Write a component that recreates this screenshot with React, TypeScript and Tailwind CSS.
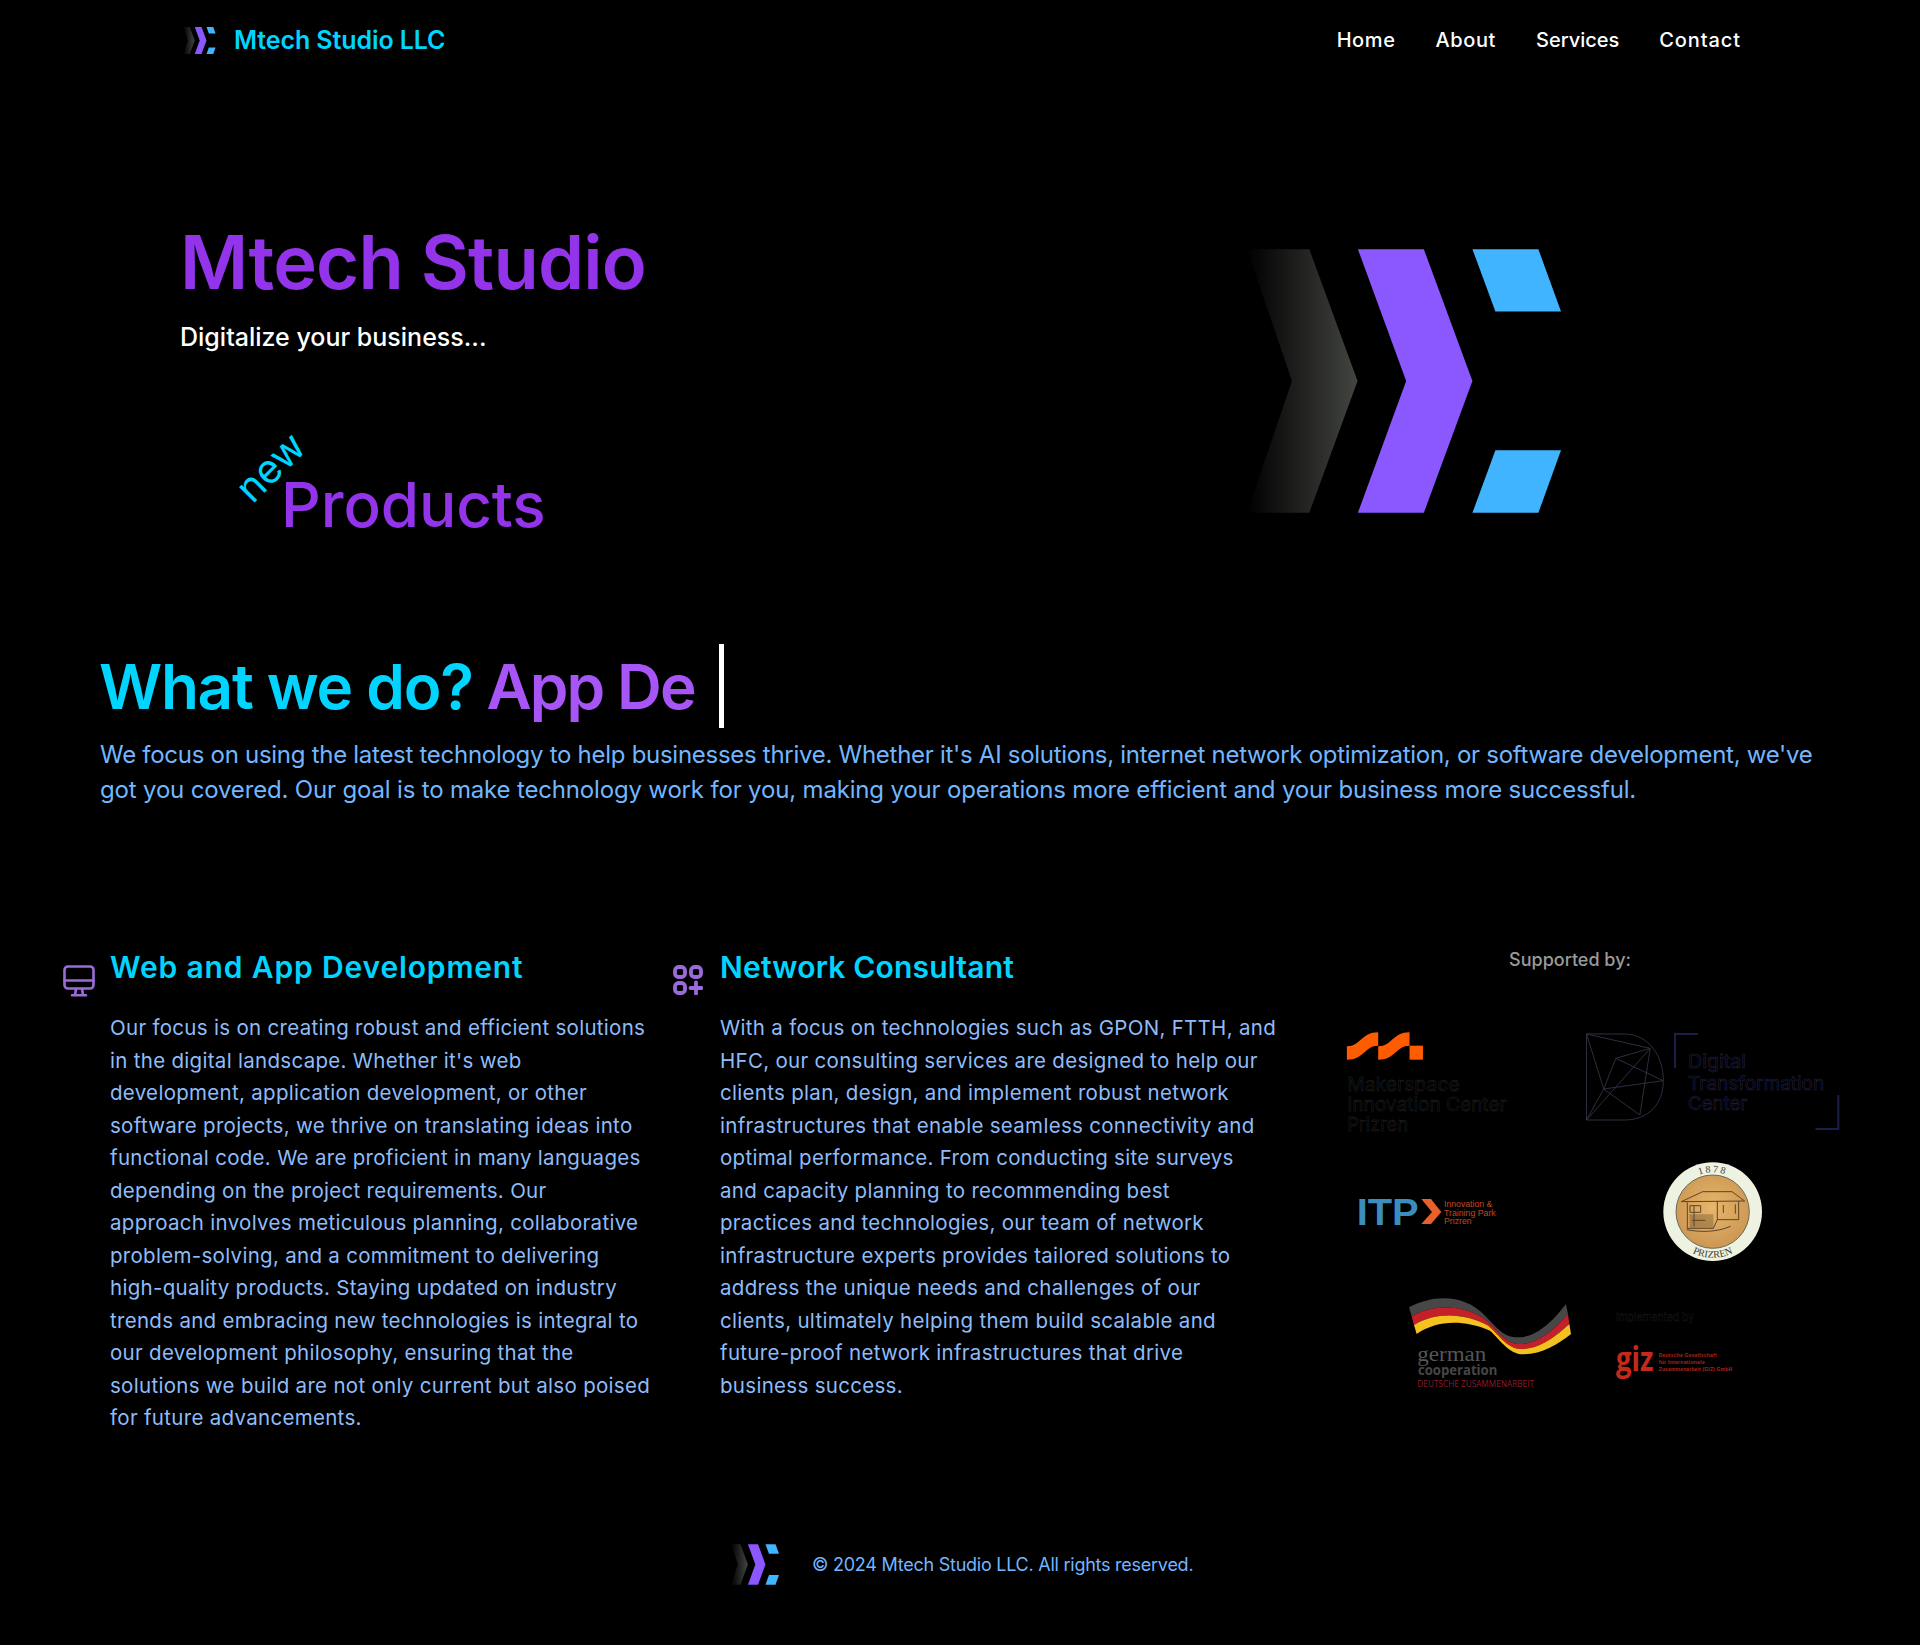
const col1 = [
  'Our focus is on creating robust and efficient solutions',
  "in the digital landscape. Whether it's web",
  'development, application development, or other',
  'software projects, we thrive on translating ideas into',
  'functional code. We are proficient in many languages',
  'depending on the project requirements. Our',
  'approach involves meticulous planning, collaborative',
  'problem-solving, and a commitment to delivering',
  'high-quality products. Staying updated on industry',
  'trends and embracing new technologies is integral to',
  'our development philosophy, ensuring that the',
  'solutions we build are not only current but also poised',
  'for future advancements.',
];

const col2 = [
  'With a focus on technologies such as GPON, FTTH, and',
  'HFC, our consulting services are designed to help our',
  'clients plan, design, and implement robust network',
  'infrastructures that enable seamless connectivity and',
  'optimal performance. From conducting site surveys',
  'and capacity planning to recommending best',
  'practices and technologies, our team of network',
  'infrastructure experts provides tailored solutions to',
  'address the unique needs and challenges of our',
  'clients, ultimately helping them build scalable and',
  'future-proof network infrastructures that drive',
  'business success.',
];

// edges of the ribbon in the german cooperation logo, top to bottom
const ribbonEdges = [
  [57, 85, 130, 45, 225, 45, 285, 110, 325, 150, 340, 175, 385, 175, 440, 175, 490, 125, 528, 75],
  [65, 112, 130, 75, 225, 75, 290, 125, 325, 155, 345, 195, 390, 195, 445, 195, 495, 150, 534, 106],
  [72, 138, 135, 100, 220, 100, 295, 140, 325, 165, 350, 210, 395, 210, 450, 210, 500, 170, 538, 135],
  [80, 165, 140, 125, 215, 120, 300, 155, 325, 175, 355, 226, 400, 226, 455, 226, 505, 195, 543, 165],
];

function ribbonBand(a: number[], b: number[]) {
  const pt = (e: number[], i: number) => `${e[i * 2]} ${e[i * 2 + 1]}`;
  return (
    `M${pt(a, 0)} C${pt(a, 1)} ${pt(a, 2)} ${pt(a, 3)} C${pt(a, 4)} ${pt(a, 5)} ${pt(a, 6)} C${pt(a, 7)} ${pt(a, 8)} ${pt(a, 9)} ` +
    `L${pt(b, 9)} C${pt(b, 8)} ${pt(b, 7)} ${pt(b, 6)} C${pt(b, 5)} ${pt(b, 4)} ${pt(b, 3)} C${pt(b, 2)} ${pt(b, 1)} ${pt(b, 0)} Z`
  );
}

function Logo({ className, id }: { className: string; id: string }) {
  return (
    <svg viewBox="80 88 943 792" className={className}>
      <defs>
        <linearGradient id={id} x1="80" x2="412" y1="0" y2="0" gradientUnits="userSpaceOnUse">
          <stop offset="0" stopColor="#000" />
          <stop offset="1" stopColor="#434541" />
        </linearGradient>
      </defs>
      <polygon points="80,88 267,88 412,484 267,880 80,880 215,484" fill={`url(#${id})`} />
      <polygon points="413,88 611,88 757,484 611,880 413,880 558,484" fill="#8b57ff" />
      <polygon points="757,88 955,88 1023,275 826,275" fill="#40b4ff" />
      <polygon points="826,692 1023,692 955,880 757,880" fill="#40b4ff" />
    </svg>
  );
}

function MakerspaceLogo() {
  const wave = 'M49 112 C90 112 90 70 140 70 V110 C100 110 100 152 49 152 Z';
  return (
    <svg viewBox="0 0 700 420" preserveAspectRatio="none" className="h-[140px] w-[241px]">
      <path d={wave} fill="#ff5c00" />
      <path d={wave} fill="#ff5c00" transform="translate(91 0)" />
      <rect x="231" y="110" width="39" height="42" fill="#ff5c00" />
      <g fill="#000" stroke="#2a2a2a" strokeWidth="1.2" fontSize="56" fontFamily="Inter, sans-serif">
        <text x="50" y="245" textLength="326" lengthAdjust="spacingAndGlyphs">Makerspace</text>
        <text x="50" y="307" textLength="463" lengthAdjust="spacingAndGlyphs">Innovation Center</text>
        <text x="50" y="367" textLength="176" lengthAdjust="spacingAndGlyphs">Prizren</text>
      </g>
    </svg>
  );
}

function DigitalLogo() {
  return (
    <svg viewBox="700 0 868 420" preserveAspectRatio="none" className="h-[140px] w-[299px]">
      <g fill="none" stroke="#34364a" strokeWidth="2.5">
        <path d="M745 75 H855 C925 75 968 140 968 215 C968 285 925 333 855 333 H745 Z" />
        <path d="M745 75 L930 118 L900 318 M745 75 L795 240 L745 333 M795 240 L968 215 M795 240 L830 148 L930 118 M830 148 L968 215 M930 118 L745 333 M795 240 L900 318" />
      </g>
      <path d="M1068 75 H1002 V178 M1410 360 H1476 V258" fill="none" stroke="#1c1e4a" strokeWidth="6" />
      <g fill="#000" stroke="#20224e" strokeWidth="1.6" fontSize="56" fontFamily="Inter, sans-serif">
        <text x="1040" y="178" textLength="168" lengthAdjust="spacingAndGlyphs">Digital</text>
        <text x="1040" y="243" textLength="395" lengthAdjust="spacingAndGlyphs">Transformation</text>
        <text x="1040" y="303" textLength="172" lengthAdjust="spacingAndGlyphs">Center</text>
      </g>
    </svg>
  );
}

function ItpLogo() {
  return (
    <svg viewBox="0 0 690 390" className="h-[130px] w-[230px]">
      <text x="80" y="227" textLength="186" lengthAdjust="spacingAndGlyphs" fontSize="108" fontWeight="700" fill="#3a8dbd" fontFamily="Liberation Sans, sans-serif">ITP</text>
      <polygon points="274,150 303,150 334,189 303,225 274,225 306,189" fill="#e8602a" />
      <g fontSize="25" fill="#c2491f" fontFamily="Liberation Sans, sans-serif">
        <text x="342" y="174" textLength="145" lengthAdjust="spacingAndGlyphs">Innovation &amp;</text>
        <text x="342" y="200" textLength="155" lengthAdjust="spacingAndGlyphs">Training Park</text>
        <text x="342" y="226" textLength="83" lengthAdjust="spacingAndGlyphs">Prizren</text>
      </g>
    </svg>
  );
}

function MedalLogo() {
  return (
    <svg viewBox="690 0 690 390" className="h-[130px] w-[230px]">
      <defs>
        <radialGradient id="medalGold" cx="0.5" cy="0.45" r="0.6">
          <stop offset="0" stopColor="#e8b66d" />
          <stop offset="1" stopColor="#c99450" />
        </radialGradient>
        <path id="medalTop" d="M1030 188 A118 118 0 0 1 1266 188" />
        <path id="medalBottom" d="M1010 188 A138 138 0 0 0 1286 188" />
      </defs>
      <circle cx="1148" cy="188" r="148" fill="#eef2e0" />
      <circle cx="1148" cy="188" r="110" fill="url(#medalGold)" stroke="#6a6a58" strokeWidth="3" />
      <text fontSize="30" fill="#3c3c34" letterSpacing="6" fontFamily="Liberation Serif, serif">
        <textPath href="#medalTop" startOffset="50%" textAnchor="middle">1878</textPath>
      </text>
      <text fontSize="30" fill="#3c3c34" fontFamily="Liberation Serif, serif">
        <textPath href="#medalBottom" startOffset="50%" textAnchor="middle">PRIZREN</textPath>
      </text>
      <g fill="none" stroke="#5c4526" strokeWidth="3">
        <path d="M1054 158 L1118 128 H1206 L1244 156 L1054 158 Z" />
        <path d="M1072 160 V238 M1162 156 V212 H1226 V156 M1072 238 H1150 L1162 212" />
        <path d="M1080 170 H1112 V190 H1080 Z M1092 170 V232 M1180 168 V192 M1216 166 V194 M1086 214 H1126 M1070 242 C1110 250 1160 250 1202 232" />
      </g>
      <path d="M1078 196 H1150 V236 H1080 Z" fill="#5c4526" opacity="0.35" />
    </svg>
  );
}

function GermanLogo() {
  const colours = ['#474747', '#c4202a', '#f4c21f'];
  return (
    <svg viewBox="0 0 600 390" className="h-[130px] w-[200px]">
      {colours.map((c, i) => (
        <path key={c} d={ribbonBand(ribbonEdges[i], ribbonEdges[i + 1])} fill={c} />
      ))}
      <text x="82" y="245" fontSize="64" fill="#565656" fontFamily="Liberation Serif, serif" textLength="207" lengthAdjust="spacingAndGlyphs">german</text>
      <text x="84" y="288" fontSize="42" fontWeight="700" fill="#474747" fontFamily="Open Sans, sans-serif" textLength="238" lengthAdjust="spacingAndGlyphs">cooperation</text>
      <text x="82" y="325" fontSize="25" fill="#8c1c2c" fontFamily="Open Sans, sans-serif" textLength="350" lengthAdjust="spacingAndGlyphs">DEUTSCHE ZUSAMMENARBEIT</text>
    </svg>
  );
}

function GizLogo() {
  return (
    <svg viewBox="600 0 480 390" className="h-[130px] w-[160px]">
      <text x="678" y="126" fontSize="34" fill="#000" stroke="#1e1e1e" strokeWidth="1" fontFamily="Inter, sans-serif" textLength="234" lengthAdjust="spacingAndGlyphs">Implemented by</text>
      <text x="678" y="276" fontSize="104" fontWeight="700" fill="#c8281c" fontFamily="Open Sans, sans-serif" textLength="112" lengthAdjust="spacingAndGlyphs">giz</text>
      <g fontSize="15" fontWeight="700" fill="#b0261c" fontFamily="Liberation Sans, sans-serif">
        <text x="806" y="235" textLength="174">Deutsche Gesellschaft</text>
        <text x="806" y="254" textLength="138">für Internationale</text>
        <text x="806" y="275" textLength="220">Zusammenarbeit (GIZ) GmbH</text>
      </g>
    </svg>
  );
}

function MonitorIcon() {
  return (
    <svg viewBox="0 0 32 32" className="h-8 w-8 shrink-0" fill="none" stroke="#9b6bdc" strokeWidth="2.6" strokeLinejoin="round" strokeLinecap="round">
      <rect x="1.5" y="1.5" width="29" height="22" rx="3.5" />
      <path d="M1.5 15.5 H30.5 M13 24 L12 30 M19 24 L20 30 M9 30.3 H23" />
    </svg>
  );
}

function AppsIcon() {
  return (
    <svg viewBox="0 0 30 30" className="h-[30px] w-[30px] shrink-0" fill="none" stroke="#9b6bdc" strokeWidth="3.8" strokeLinecap="round">
      <rect x="2" y="2" width="10" height="10" rx="3.6" />
      <rect x="18" y="2" width="10" height="10" rx="3.6" />
      <rect x="2" y="18" width="10" height="10" rx="3.6" />
      <path d="M23 17.5 V28.5 M17.5 23 H28.5" />
    </svg>
  );
}

function Service({ icon, title, titleClass, lines, className }: { icon: React.ReactNode; title: string; titleClass: string; lines: string[]; className: string }) {
  return (
    <div className={`flex shrink-0 ${className}`}>
      <div className="pt-[16px]">{icon}</div>
      <div>
        <h3 className={`text-[30px] leading-[36px] font-semibold text-[#00d4ff] ${titleClass}`}>{title}</h3>
        <p className="mt-[27px] text-[20.5px] leading-[32.5px] tracking-[0.3px] text-[#8fbcf8]">
          {lines.map((l) => (
            <span key={l} className="block whitespace-nowrap">{l}</span>
          ))}
        </p>
      </div>
    </div>
  );
}

export default function App() {
  return (
    <div className="h-[1645px] overflow-hidden bg-black font-['Inter',sans-serif]">
      {/* Header */}
      <header className="flex h-20 items-center justify-between pr-[179px] pl-[183px]">
        <div className="flex items-center gap-[18px]">
          <Logo id="logoHead" className="h-[27px] w-[33px]" />
          <span className="mt-px text-[25px] font-semibold tracking-[-0.1px] text-[#00d4ff]">Mtech Studio LLC</span>
        </div>
        <nav className="flex gap-10 text-[20px] font-medium tracking-[0.6px] text-white">
          <a>Home</a>
          <a>About</a>
          <a className="tracking-normal">Services</a>
          <a className="tracking-[0.9px]">Contact</a>
        </nav>
      </header>

      {/* Hero */}
      <section className="flex justify-between pr-[359px] pl-[180px]">
        <div className="pt-[146px]">
          <h1 className="text-[74px] leading-[72px] font-semibold tracking-[-0.8px] text-[#9333ea]">Mtech Studio</h1>
          <p className="mt-[23px] text-[25px] leading-8 font-medium text-white">Digitalize your business...</p>
          <div className="relative mt-[122px] ml-[101px] text-[62px] leading-[60px] font-medium tracking-[-0.1px] text-[#9333ea]">
            Products
            <span className="absolute top-[-38px] left-[-50px] -rotate-45 text-[40px] leading-[60px] font-normal text-[#00d4ff]">new</span>
          </div>
        </div>
        <div className="pt-[169px]">
          <Logo id="logoHero" className="h-[264px] w-[314px]" />
        </div>
      </section>

      {/* What we do */}
      <section className="mt-[109px] pl-[99px]">
        <h2 className="flex h-[84px] items-center text-[62px] font-semibold tracking-[-1.3px] whitespace-nowrap">
          <span className="text-[#00d4ff]">What we do?</span>
          <span className="ml-[14px] tracking-[-1.9px] text-[#a855f7]">App De</span>
          <span className="ml-[24px] h-[84px] w-[5px] bg-white" />
        </h2>
        <p className="mt-[9px] pl-px text-[24px] leading-[35px] text-[#72b6ff]">
          <span className="block tracking-[-0.28px] whitespace-nowrap">We focus on using the latest technology to help businesses thrive. Whether it's AI solutions, internet network optimization, or software development, we've</span>
          <span className="block tracking-[-0.17px] whitespace-nowrap">got you covered. Our goal is to make technology work for you, making your operations more efficient and your business more successful.</span>
        </p>
      </section>

      {/* Services and supporters */}
      <section className="mt-[142px] flex pl-[63px]">
        <Service icon={<MonitorIcon />} title="Web and App Development" titleClass="tracking-[0.85px]" lines={col1} className="w-[610px] gap-[15px]" />
        <Service icon={<AppsIcon />} title="Network Consultant" titleClass="tracking-[0.2px]" lines={col2} className="w-[657px] gap-[17px]" />
        <div className="-mt-[3px] w-[540px] shrink-0">
          <p className="w-[480px] text-center text-[18px] leading-7 font-medium text-[#9a9a9a]">Supported by:</p>
          <div className="mt-[35px] flex">
            <MakerspaceLogo />
            <DigitalLogo />
          </div>
          <div className="flex">
            <ItpLogo />
            <MedalLogo />
          </div>
          <div className="ml-[60px] flex">
            <GermanLogo />
            <GizLogo />
          </div>
        </div>
      </section>

      {/* Footer */}
      <footer className="mt-[109px] flex items-center pl-[731px]">
        <Logo id="logoFoot" className="h-[41px] w-[48px]" />
        <p className="ml-[33px] text-[18px] font-normal tracking-[-0.25px] text-[#72b6ff]">© 2024 Mtech Studio LLC. All rights reserved.</p>
      </footer>
    </div>
  );
}
